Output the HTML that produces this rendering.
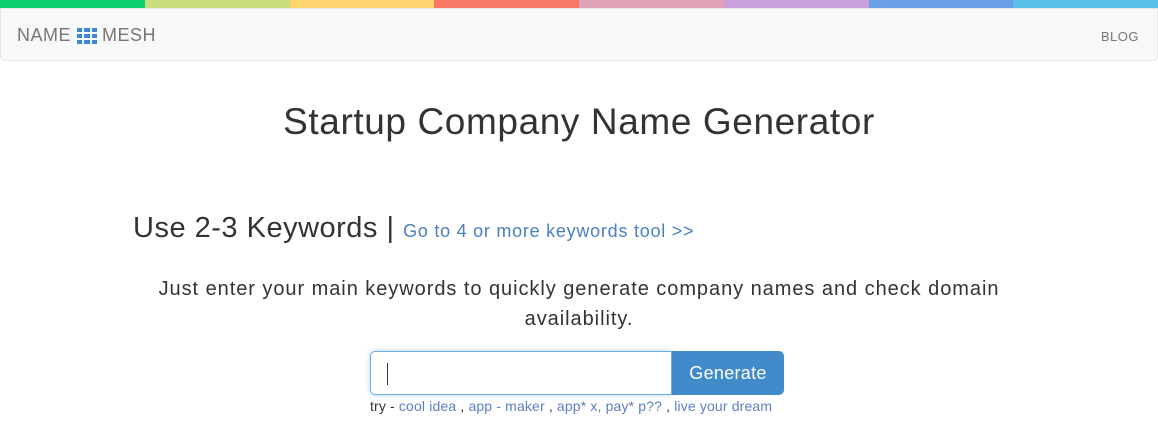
<!DOCTYPE html>
<html><head><meta charset="utf-8"><style>
body{margin:0;width:1158px;height:424px;overflow:hidden;background:#fff;font-family:"Liberation Sans",sans-serif;color:#333}
.bar{display:flex;height:9px}.bar div{flex:1}
.nav{position:absolute;top:8px;left:0;width:1156px;height:51px;background:#f8f8f8;border:1px solid #e7e7e7;border-radius:0 0 4px 4px}
.logo{position:absolute;left:16px;top:16px;font-size:18px;color:#777;display:flex;align-items:center;letter-spacing:0.5px}
.blog{position:absolute;right:18px;top:20px;font-size:13px;color:#777;letter-spacing:0.5px}
h1{position:absolute;top:101px;left:0;width:1158px;text-align:center;font-weight:normal;font-size:37px;margin:0;color:#333;letter-spacing:0.6px}
.kw{position:absolute;left:133px;top:212px;font-size:29px;letter-spacing:0.5px}
.kw a{font-size:18px;color:#4a7fc1;text-decoration:none;letter-spacing:0.75px}
p{position:absolute;top:274px;left:144px;width:870px;text-align:center;font-size:20px;line-height:30px;margin:0;letter-spacing:0.95px}
.inp{position:absolute;left:370px;top:351px;width:300px;height:42px;border:1px solid #66afe9;border-radius:5px 0 0 5px;box-shadow:0 0 6px rgba(102,175,233,.5)}
.inp i{position:absolute;left:16px;top:11px;width:1px;height:22px;background:#333}
.btn{position:absolute;left:672px;top:351px;width:112px;height:44px;background:#428bca;border-radius:0 5px 5px 0;color:#fff;font-size:18px;line-height:44px;text-align:center;letter-spacing:0.3px}
.try{position:absolute;left:370px;top:398px;font-size:14px;color:#333;letter-spacing:0.15px}
.try span{color:#5b7fc1}
</style></head><body>
<div class="bar"><div style="background:#0ccf6f"></div><div style="background:#c8de7d"></div><div style="background:#fed46e"></div><div style="background:#fa7866"></div><div style="background:#e0a2b8"></div><div style="background:#c9a0dc"></div><div style="background:#6a9fe6"></div><div style="background:#5bc0e8"></div></div>
<div class="nav"><div class="logo">NAME&nbsp;<svg width="20" height="16" viewBox="0 0 20 16"><g fill="#3a87d6"><rect x="0" y="0" width="5" height="4"/><rect x="7" y="0" width="6" height="4"/><rect x="15" y="0" width="5" height="4"/><rect x="0" y="6" width="5" height="4"/><rect x="7" y="6" width="6" height="4"/><rect x="15" y="6" width="5" height="4"/><rect x="0" y="12" width="5" height="4"/><rect x="7" y="12" width="6" height="4"/><rect x="15" y="12" width="5" height="4"/></g></svg>&nbsp;MESH</div><div class="blog">BLOG</div></div>
<h1>Startup Company Name Generator</h1>
<div class="kw">Use 2-3 Keywords <span style="font-weight:300">|</span> <a>Go to 4 or more keywords tool &gt;&gt;</a></div>
<p>Just enter your main keywords to quickly generate company names and check domain availability.</p>
<div class="inp"><i></i></div><div class="btn">Generate</div>
<div class="try">try - <span>cool idea</span> , <span>app - maker</span> , <span>app* x, pay* p??</span> , <span>live your dream</span></div>
</body></html>
